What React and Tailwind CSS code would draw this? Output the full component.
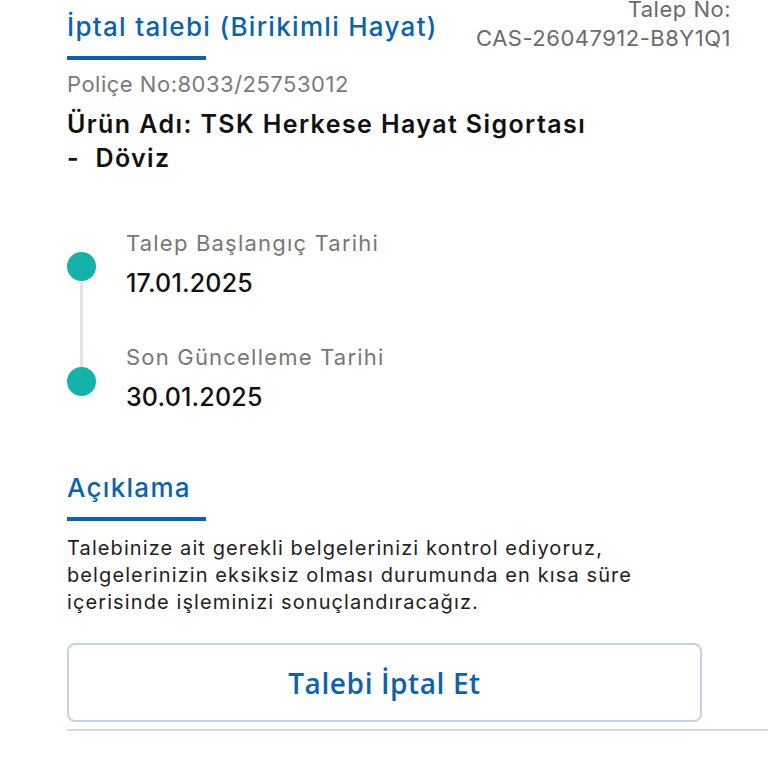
import React from 'react'

const BLUE = 'text-[#0b62ae]'

function Heading({ children, className = '' }) {
  return (
    <div className={className}>
      <h2 className={`text-[26px] font-medium tracking-[1.3px] leading-[32px] ${BLUE}`}>{children}</h2>
      <div className="mt-[13px] h-[4px] w-[139px] bg-[#0b62ae]" />
    </div>
  )
}

function Step({ label, date }) {
  return (
    <div className="flex flex-col">
      <span className="text-[22px] tracking-[1.2px] leading-[28px] text-[#777]">{label}</span>
      <span className="mt-[11px] text-[25px] tracking-[0.2px] leading-[30px] font-medium text-[#111]">{date}</span>
    </div>
  )
}

export default function App() {
  return (
    <div
      className="w-[768px] h-[768px] overflow-hidden bg-white"
      style={{ fontFamily: 'Inter, "Noto Sans", sans-serif' }}
    >
      <div className="pl-[67px]">
        {/* Header */}
        <div className="flex items-start justify-between pr-[37px]">
          <Heading className="pt-[11px]">İptal talebi (Birikimli Hayat)</Heading>
          <div className="-mt-[5px] text-right text-[22px] tracking-[0.5px] leading-[29px] text-[#6b6b6b]">
            <div>Talep No:</div>
            <div>CAS-26047912-B8Y1Q1</div>
          </div>
        </div>

        <p className="mt-[9px] text-[22px] tracking-[0.5px] leading-[30px] text-[#7a7a7a]">Poliçe No:8033/25753012</p>
        <p className="mt-[8px] w-[640px] text-[25px] tracking-[1.4px] leading-[34px] font-semibold text-[#111]">
          Ürün Adı: TSK Herkese Hayat Sigortası
          <br />-&nbsp; Döviz
        </p>

        {/* Timeline */}
        <div className="mt-[54px] flex gap-[30px]">
          <div className="flex flex-col items-center pt-[23px]">
            <div className="h-[29px] w-[29px] rounded-full bg-[#14b2a9]" />
            <div className="h-[86px] w-[3px] bg-[#e1e1e6]" />
            <div className="h-[29px] w-[29px] rounded-full bg-[#14b2a9]" />
          </div>
          <div className="flex flex-col gap-[45px]">
            <Step label="Talep Başlangıç Tarihi" date="17.01.2025" />
            <Step label="Son Güncelleme Tarihi" date="30.01.2025" />
          </div>
        </div>

        {/* Description */}
        <Heading className="mt-[60px]">Açıklama</Heading>
        <p className="mt-[14px] w-[660px] text-[20px] tracking-[1.1px] leading-[27px] text-[#222]">
          Talebinize ait gerekli belgelerinizi kontrol ediyoruz,
          <br />belgelerinizin eksiksiz olması durumunda en kısa süre
          <br />içerisinde işleminizi sonuçlandıracağız.
        </p>

        <button
          className="mt-[27px] flex h-[79px] w-[635px] items-center justify-center rounded-[8px] border-2 border-[#c3d4e4] bg-white text-[28px] tracking-[0.6px] font-semibold text-[#0b62ae]"
          style={{ fontFamily: '"Open Sans", sans-serif' }}
        >
          Talebi İptal Et
        </button>
        <div className="mt-[7px] h-[2px] bg-[#dadada]" />
      </div>
    </div>
  )
}
